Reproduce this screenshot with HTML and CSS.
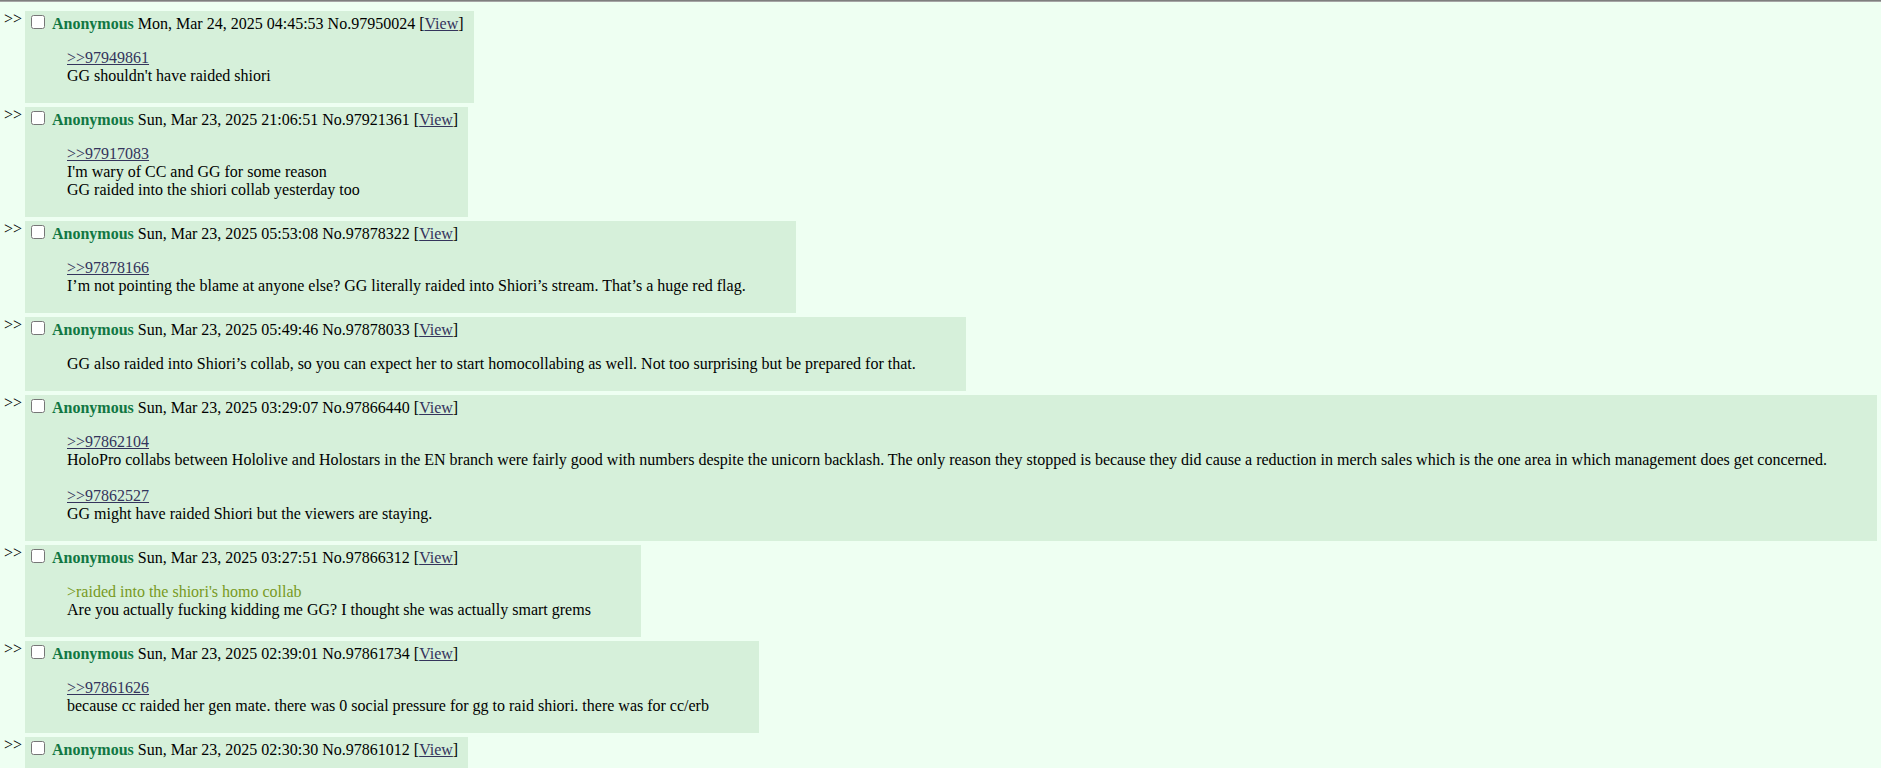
FILE: index.html
```html
<!DOCTYPE html>
<html lang="en">
<head>
    <meta charset="UTF-8">
    <title>Search results</title>
    <link rel="stylesheet" href="styles.css">
</head>
<body>
    <div class="topline"></div>

    <div class="posts">
        <div class="post">
            <div class="doubledash">&gt;&gt;</div>
            <div class="reply">
                <div class="post-head">
                    <label><input type="checkbox"> <span class="postername">Anonymous</span> Mon, Mar 24, 2025 04:45:53</label>
                    No.97950024 [<a href="#">View</a>]
                </div>
                <blockquote>
                    <a class="backlink" href="#">&gt;&gt;97949861</a><br>
                    GG shouldn't have raided shiori
                </blockquote>
            </div>
        </div>

        <div class="post">
            <div class="doubledash">&gt;&gt;</div>
            <div class="reply">
                <div class="post-head">
                    <label><input type="checkbox"> <span class="postername">Anonymous</span> Sun, Mar 23, 2025 21:06:51</label>
                    No.97921361 [<a href="#">View</a>]
                </div>
                <blockquote>
                    <a class="backlink" href="#">&gt;&gt;97917083</a><br>
                    I'm wary of CC and GG for some reason<br>
                    GG raided into the shiori collab yesterday too
                </blockquote>
            </div>
        </div>

        <div class="post">
            <div class="doubledash">&gt;&gt;</div>
            <div class="reply">
                <div class="post-head">
                    <label><input type="checkbox"> <span class="postername">Anonymous</span> Sun, Mar 23, 2025 05:53:08</label>
                    No.97878322 [<a href="#">View</a>]
                </div>
                <blockquote>
                    <a class="backlink" href="#">&gt;&gt;97878166</a><br>
                    I’m not pointing the blame at anyone else? GG literally raided into Shiori’s stream. That’s a huge red flag.
                </blockquote>
            </div>
        </div>

        <div class="post">
            <div class="doubledash">&gt;&gt;</div>
            <div class="reply">
                <div class="post-head">
                    <label><input type="checkbox"> <span class="postername">Anonymous</span> Sun, Mar 23, 2025 05:49:46</label>
                    No.97878033 [<a href="#">View</a>]
                </div>
                <blockquote>
                    GG also raided into Shiori’s collab, so you can expect her to start homocollabing as well. Not too surprising but be prepared for that.
                </blockquote>
            </div>
        </div>

        <div class="post">
            <div class="doubledash">&gt;&gt;</div>
            <div class="reply">
                <div class="post-head">
                    <label><input type="checkbox"> <span class="postername">Anonymous</span> Sun, Mar 23, 2025 03:29:07</label>
                    No.97866440 [<a href="#">View</a>]
                </div>
                <blockquote>
                    <a class="backlink" href="#">&gt;&gt;97862104</a><br>
                    HoloPro collabs between Hololive and Holostars in the EN branch were fairly good with numbers despite the unicorn backlash. The only reason they stopped is because they did cause a reduction in merch sales which is the one area in which management does get concerned.<br>
                    <br>
                    <a class="backlink" href="#">&gt;&gt;97862527</a><br>
                    GG might have raided Shiori but the viewers are staying.
                </blockquote>
            </div>
        </div>

        <div class="post">
            <div class="doubledash">&gt;&gt;</div>
            <div class="reply">
                <div class="post-head">
                    <label><input type="checkbox"> <span class="postername">Anonymous</span> Sun, Mar 23, 2025 03:27:51</label>
                    No.97866312 [<a href="#">View</a>]
                </div>
                <blockquote>
                    <span class="greentext">&gt;raided into the shiori's homo collab</span><br>
                    Are you actually fucking kidding me GG? I thought she was actually smart grems
                </blockquote>
            </div>
        </div>

        <div class="post">
            <div class="doubledash">&gt;&gt;</div>
            <div class="reply">
                <div class="post-head">
                    <label><input type="checkbox"> <span class="postername">Anonymous</span> Sun, Mar 23, 2025 02:39:01</label>
                    No.97861734 [<a href="#">View</a>]
                </div>
                <blockquote>
                    <a class="backlink" href="#">&gt;&gt;97861626</a><br>
                    because cc raided her gen mate. there was 0 social pressure for gg to raid shiori. there was for cc/erb
                </blockquote>
            </div>
        </div>

        <div class="post">
            <div class="doubledash">&gt;&gt;</div>
            <div class="reply">
                <div class="post-head">
                    <label><input type="checkbox"> <span class="postername">Anonymous</span> Sun, Mar 23, 2025 02:30:30</label>
                    No.97861012 [<a href="#">View</a>]
                </div>
                <blockquote>
                    <a class="backlink" href="#">&gt;&gt;97860871</a>
                </blockquote>
            </div>
        </div>
    </div>
</body>
</html>
```

FILE: styles.css
```css
body {
    margin: 0;
    background-color: #eefff2;
    color: #000;
    font-family: 'Liberation Serif', 'Times New Roman', serif;
    font-size: 16px;
}

a {
    color: #34345c;
}

.topline {
    border-top: 1px solid #7f7f7f;
    border-bottom: 1px solid #a5a5a5;
    margin-bottom: 9px;
}

.posts {
    display: flex;
    flex-direction: column;
    gap: 4px;
    padding-left: 2px;
}

.post {
    display: flex;
    align-items: flex-start;
    gap: 2px;
}

.doubledash {
    flex: 0 0 auto;
    width: 19px;
    padding-left: 2px;
    margin-top: -1px;
}

.reply {
    background-color: #d6f0da;
    padding: 2px 10px 2px 2px;
}

.post-head input {
    width: 14px;
    height: 14px;
    margin: 2px 3px 2px 4px;
    vertical-align: baseline;
}

.postername {
    color: #117743;
    font-weight: bold;
}

blockquote {
    margin: 16px 40px;
}

.greentext {
    color: #789922;
}
```
